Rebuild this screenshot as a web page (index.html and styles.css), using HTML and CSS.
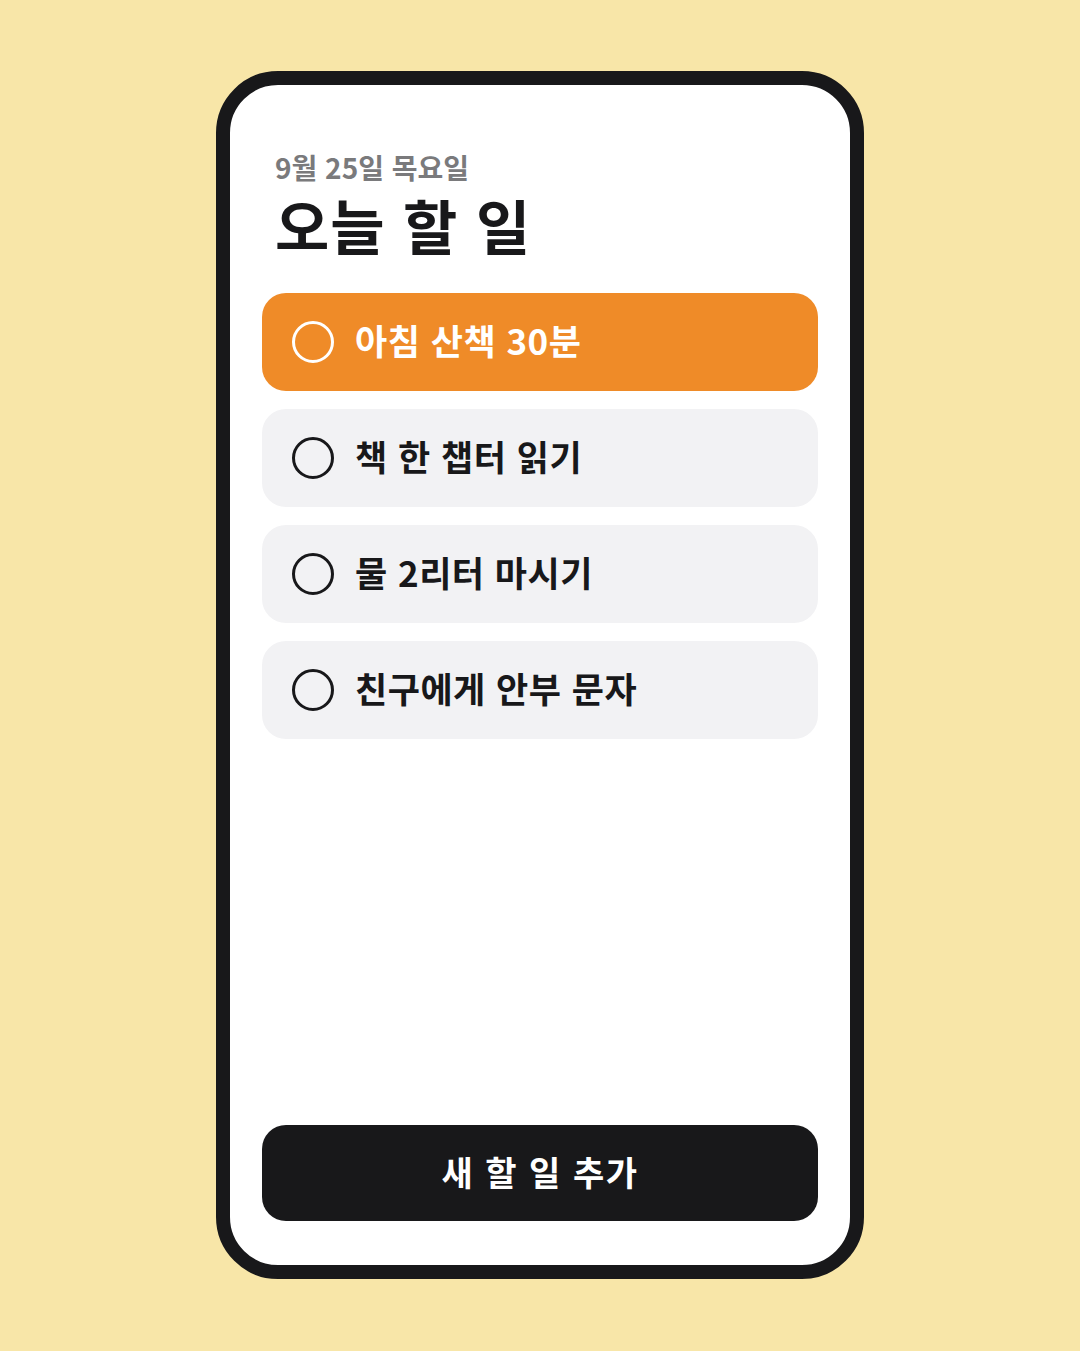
FILE: index.html
```html
<!DOCTYPE html>
<html lang="ko">
<head>
  <meta charset="UTF-8" />
  <meta name="viewport" content="width=device-width, initial-scale=1" />
  <title>오늘 할 일</title>
  <link rel="stylesheet" href="styles.css">
</head>
<body>
  <div class="phone">
    <div class="screen">
      <div class="header">
        <div class="date">9월 25일 목요일</div>
        <h1 class="title">오늘 할 일</h1>
      </div>

      <ul class="todo-list">
        <li class="todo active"><span class="check"></span><span class="label">아침 산책 30분</span></li>
        <li class="todo"><span class="check"></span><span class="label">책 한 챕터 읽기</span></li>
        <li class="todo"><span class="check"></span><span class="label">물 2리터 마시기</span></li>
        <li class="todo"><span class="check"></span><span class="label">친구에게 안부 문자</span></li>
      </ul>

      <button class="add-button">새 할 일 추가</button>
    </div>
  </div>
</body>
</html>
```

FILE: styles.css
```css
* {
  box-sizing: border-box;
  margin: 0;
  padding: 0;
}

html, body {
  height: 100%;
  background-color: #f8e6a8;
  font-family: 'Noto Sans CJK KR', 'Noto Sans', sans-serif;
}

body {
  display: flex;
  justify-content: center;
  padding-top: 71px;
}

/* Phone frame */
.phone {
  width: 648px;
  height: 1208px;
  border: 14px solid #18181a;
  border-radius: 62px;
  background-color: #fff;
  overflow: hidden;
}

.screen {
  height: 100%;
  display: flex;
  flex-direction: column;
  padding: 64px 32px 44px;
}

/* Header */
.header {
  padding: 0 13px;
}

.date {
  font-size: 28px;
  font-weight: 700;
  line-height: 36px;
  color: #7a7a7c;
}

.title {
  font-size: 59px;
  font-weight: 700;
  line-height: 72px;
  letter-spacing: 1px;
  color: #18181a;
  margin-top: 4px;
}

/* Todo list */
.todo-list {
  list-style: none;
  display: flex;
  flex-direction: column;
  gap: 18px;
  margin-top: 32px;
}

.todo {
  height: 98px;
  display: flex;
  align-items: center;
  padding: 0 30px;
  background-color: #f2f2f4;
  border-radius: 24px;
  color: #18181a;
}

.todo.active {
  background-color: #ef8b28;
  color: #fff;
}

.check {
  width: 42px;
  height: 42px;
  border: 3.5px solid currentColor;
  border-radius: 50%;
  flex-shrink: 0;
}

.label {
  margin-left: 21px;
  padding-bottom: 5px;
  font-size: 35px;
  font-weight: 700;
  letter-spacing: 0.5px;
}

/* Add button */
.add-button {
  margin-top: auto;
  height: 96px;
  padding-bottom: 4px;
  border: none;
  border-radius: 24px;
  background-color: #18181a;
  color: #fff;
  font-family: inherit;
  font-size: 34px;
  font-weight: 700;
  letter-spacing: 1.5px;
  cursor: pointer;
}
```
